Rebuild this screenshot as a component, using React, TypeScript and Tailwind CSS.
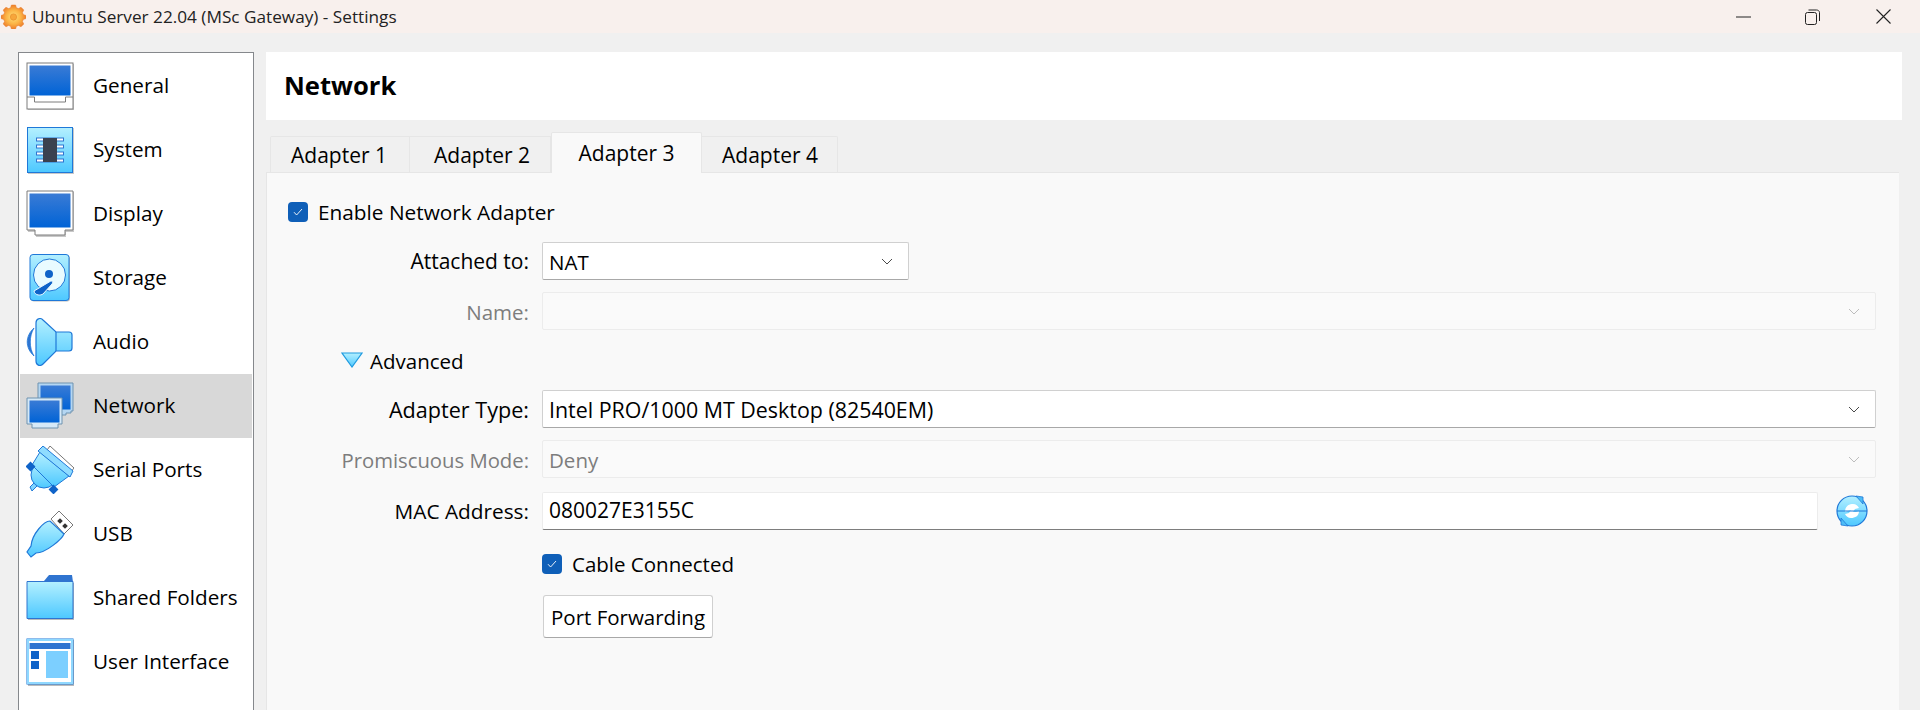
import type { ReactNode } from 'react'

const BLUE = '#2f74d0'

function Defs() {
	return (
		<svg width="0" height="0" className="absolute">
			<defs>
				<linearGradient id="screen" x1="0" y1="0" x2="0" y2="1">
					<stop offset="0" stopColor="#3a7bd5" />
					<stop offset="1" stopColor="#0063d6" />
				</linearGradient>
				<linearGradient id="sky" x1="0" y1="0" x2="0" y2="1">
					<stop offset="0" stopColor="#b4f0ff" />
					<stop offset="1" stopColor="#4dc8ff" />
				</linearGradient>
				<radialGradient id="gear" cx="0.5" cy="0.5" r="0.5">
					<stop offset="0" stopColor="#ffe27a" />
					<stop offset="0.6" stopColor="#fbb244" />
					<stop offset="1" stopColor="#ee7f2c" />
				</radialGradient>
			</defs>
		</svg>
	)
}

function IconBox({ children }: { children: ReactNode }) {
	return (
		<svg width="48" height="48" viewBox="0 0 48 48" className="shrink-0">
			{children}
		</svg>
	)
}

function GeneralIcon() {
	return (
		<IconBox>
			<rect x="2" y="2" width="47" height="46" fill="#c8c8c8" />
			<rect x="1" y="1" width="46" height="46" fill="#fff" stroke="#7c7c7c" strokeWidth="1" />
			<rect x="3.5" y="3.5" width="41" height="30" fill="url(#screen)" />
			<path d="M1 35H8.5V40H39.5V35H47" fill="none" stroke="#7c7c7c" />
		</IconBox>
	)
}

function SystemIcon() {
	return (
		<IconBox>
			<rect x="2" y="2" width="46" height="46" fill="#c8c8c8" />
			<rect x="1.5" y="1.5" width="45" height="45" fill="url(#sky)" stroke="#1f78d8" />
			{[13, 20, 27, 34].map((y) => (
				<rect key={y} x="10.5" y={y - 1} width="27" height="3" fill="#fff" stroke="#2f74d0" />
			))}
			<rect x="17" y="12" width="14" height="24" fill="#3a4150" />
		</IconBox>
	)
}

function DisplayIcon() {
	return (
		<IconBox>
			<path d="M2 2H48V42H40V47H10V42H2Z" fill="#c8c8c8" />
			<path d="M1 1H47V40H39V45H9V40H1Z" fill="#fff" stroke="#7c7c7c" />
			<rect x="3.5" y="3.5" width="41" height="34" fill="url(#screen)" />
		</IconBox>
	)
}

function StorageIcon() {
	return (
		<IconBox>
			<rect x="5" y="1.5" width="39" height="46" rx="3" fill="#bbb" />
			<rect x="4" y="0.5" width="39" height="46" rx="3" fill="url(#sky)" stroke="#1f78d8" />
			<circle cx="23.5" cy="21" r="16" fill="#e9fbff" stroke="#1f78d8" />
			<circle cx="23" cy="20" r="4" fill="#0f63c8" />
			<path d="M8 37L24 27.5C26 26.3 27.5 28 26 30L17 40C15 41.5 9 42 8 37Z" fill="#0f63c8" stroke="#eaf9ff" />
		</IconBox>
	)
}

function AudioIcon() {
	return (
		<IconBox>
			<path d="M8 10C-1 18 -1 30 8 38C3 30 3 18 8 10Z" fill="#2f74d0" stroke="#1f78d8" strokeWidth="0.8" />
			<path d="M10 5C10 1 14 -1 17 2L30 14H43C45 14 46 15 46 17V30C46 32 45 33 43 33H30L17 46C14 49 10 47 10 43Z" fill="url(#sky)" stroke="#1f78d8" strokeWidth="1.2" />
			<path d="M30 14V33" stroke="#1f78d8" strokeWidth="1.2" />
		</IconBox>
	)
}

function NetworkIcon() {
	return (
		<svg width="48" height="48" viewBox="0 0 48 48" className="shrink-0">
			<path d="M12 1H47V29H45V31H40V33H12Z" fill="#b4d6f2" stroke="#6f93b0" />
			<rect x="14.5" y="3.5" width="30" height="24" fill="url(#screen)" />
			<path d="M1 16H36V42H32V46H6V42H1Z" fill="#d5e9f8" stroke="#6f93b0" />
			<rect x="3.5" y="18.5" width="30" height="22" fill="url(#screen)" />
		</svg>
	)
}

function SerialIcon() {
	return (
		<IconBox>
			<path d="M24 0L48 22L44 27L21 4Z" fill="#fff" stroke="#777" />
			<path d="M4 41L9 36L12 39L6 45Z" fill="#7ed4ff" stroke="#1f78d8" />
			<circle cx="18" cy="29" r="13" fill="url(#sky)" stroke="#1f78d8" />
			<path d="M14 6L43 30L28 41L6 19Z" fill="url(#sky)" stroke="#1f78d8" />
			<path d="M17 0L47 25L44 31L12 5Z" fill="#8fdcff" stroke="#1f78d8" />
			<rect x="1" y="17" width="7" height="7" fill="#0f63c8" transform="rotate(45 4.5 20.5)" />
			<rect x="24" y="40" width="7" height="7" fill="#0f63c8" transform="rotate(45 27.5 43.5)" />
		</IconBox>
	)
}

function UsbIcon() {
	return (
		<IconBox>
			<path d="M25 9L33 1L47 15L38 24Z" fill="#fff" stroke="#777" />
			<rect x="32" y="9" width="4" height="4" fill="#333" transform="rotate(45 34 11)" />
			<rect x="37" y="14" width="4" height="4" fill="#333" transform="rotate(45 39 16)" />
			<path d="M24 11C18 11 6 24 5 36L1 42L5 47L10 43C20 43 36 29 38 24Z" fill="url(#sky)" stroke="#1f78d8" strokeWidth="1.2" />
		</IconBox>
	)
}

function FolderIcon() {
	return (
		<IconBox>
			<path d="M2 9H48V46H2Z" fill="#bbb" />
			<path d="M18 7L23 1H46L47 8H18Z" fill={BLUE} />
			<path d="M1 7.5H47V44.5H1Z" fill="url(#sky)" stroke="#2f74d0" />
		</IconBox>
	)
}

function UiIcon() {
	return (
		<IconBox>
			<rect x="2" y="2" width="46" height="46" fill="#bbb" />
			<rect x="1" y="1" width="46" height="45" fill="#fff" stroke="#1f78d8" strokeWidth="1" />
			<rect x="2" y="2" width="44" height="43" fill="none" stroke="#8fd8ff" strokeWidth="2" />
			<rect x="3.5" y="5" width="41" height="6" fill={BLUE} />
			<rect x="5" y="13" width="8" height="8" fill="#0f63c8" />
			<rect x="5" y="23" width="8" height="8" fill="#0f63c8" />
			<rect x="20" y="13" width="22" height="27" fill="#7ccfff" />
		</IconBox>
	)
}

const sections = [
	{ label: 'General', icon: <GeneralIcon /> },
	{ label: 'System', icon: <SystemIcon /> },
	{ label: 'Display', icon: <DisplayIcon /> },
	{ label: 'Storage', icon: <StorageIcon /> },
	{ label: 'Audio', icon: <AudioIcon /> },
	{ label: 'Network', icon: <NetworkIcon />, active: true },
	{ label: 'Serial Ports', icon: <SerialIcon /> },
	{ label: 'USB', icon: <UsbIcon /> },
	{ label: 'Shared Folders', icon: <FolderIcon /> },
	{ label: 'User Interface', icon: <UiIcon /> },
]

function Checkbox() {
	return (
		<span className="flex h-5 w-5 shrink-0 items-center justify-center rounded-[4px] bg-[#0f5fb8]">
			<svg width="10" height="8" viewBox="0 0 10 8" fill="none">
				<path d="M1 4.2L3.6 7L9 1" stroke="#fff" strokeWidth="0.9" />
			</svg>
		</span>
	)
}

function Chevron({ dim }: { dim?: boolean }) {
	return (
		<svg width="12" height="7" viewBox="0 0 12 7" fill="none" className="shrink-0">
			<path d="M1 1L6 6L11 1" stroke={dim ? '#bdbdbd' : '#4a4a4a'} strokeWidth="1" />
		</svg>
	)
}

function Row({ label, dim, className, labelClass, children }: { label: string; dim?: boolean; className?: string; labelClass?: string; children: ReactNode }) {
	return (
		<div className={`flex h-[38px] items-center ${className ?? ''}`}>
			<span className={`w-[262px] shrink-0 pt-[2px] text-right ${dim ? 'text-[#7d7d7d]' : 'text-black'} ${labelClass ?? ''}`}>{label}</span>
			<div className="ml-[13px] flex h-full min-w-0 flex-1 items-center">{children}</div>
		</div>
	)
}

function Combo({ value, dim, className, valueClass }: { value?: string; dim?: boolean; className?: string; valueClass?: string }) {
	return (
		<div
			className={`flex h-full items-center justify-between rounded-[2px] border pl-[6px] pr-[15px] ${
				dim ? 'border-[#ececec] bg-[#fafafa] text-[#7d7d7d]' : 'border-[#d0d0d0] border-b-[#a8a8a8] bg-white text-black'
			} ${className ?? ''}`}
		>
			<span className={`pt-[2px] ${valueClass ?? ''}`}>{value}</span>
			<Chevron dim={dim} />
		</div>
	)
}

function Tab({ label, active, className }: { label: string; active?: boolean; className: string }) {
	return (
		<div
			className={`flex items-center justify-center border border-b-0 border-[#e6e6e6] text-[21px] ${
				active ? 'relative z-10 -mb-px h-[41px] bg-[#f9f9f9] pt-[1px]' : 'h-[36px] bg-[#f0f0f0] pt-[3px]'
			} ${className}`}
		>
			{label}
		</div>
	)
}

export default function App() {
	return (
		<div className="flex h-[710px] w-[1920px] flex-col overflow-hidden bg-[#f0f0f0] font-['Open_Sans',sans-serif] text-[20.5px] text-black">
			<Defs />
			{/* title bar */}
			<div className="flex h-[33px] shrink-0 items-center bg-[#f8f0ed] pl-[1px]">
				<svg width="25" height="25" viewBox="0 0 24 24" className="shrink-0">
					<path
						d="M10 1H14L14.8 3.6 16.8 4.4 19.2 3.1 21.9 5.8 20.6 8.2 21.4 10.2 24 11V14L21.4 14.8 20.6 16.8 21.9 19.2 19.2 21.9 16.8 20.6 14.8 21.4 14 24H10L9.2 21.4 7.2 20.6 4.8 21.9 2.1 19.2 3.4 16.8 2.6 14.8 0 14V11L2.6 10.2 3.4 8.2 2.1 5.8 4.8 3.1 7.2 4.4 9.2 3.6Z"
						fill="url(#gear)"
						stroke="#e87f30"
						strokeWidth="0.5"
					/>
					<circle cx="12" cy="12.5" r="3" fill="#f7a63a" stroke="#e8902f" strokeWidth="0.7" />
				</svg>
				<span className="ml-[6px] text-[17.2px] text-[#222]">Ubuntu Server 22.04 (MSc Gateway) - Settings</span>
				<div className="ml-auto flex items-center text-[#222]">
					<svg width="15" height="2" viewBox="0 0 15 2" className="mr-[54px]">
						<path d="M0 1H15" stroke="#222" strokeWidth="1" />
					</svg>
					<svg width="15" height="16" viewBox="0 0 15 16" fill="none" className="mr-[56px]">
						<rect x="0.5" y="3.5" width="11" height="12" rx="2" stroke="#222" />
						<path d="M3.5 1H11.5C13 1 14.5 2 14.5 3.5V12" stroke="#222" />
					</svg>
					<svg width="15" height="15" viewBox="0 0 15 15" fill="none" className="mr-[29px]">
						<path d="M0.5 0.5L14.5 14.5M14.5 0.5L0.5 14.5" stroke="#222" strokeWidth="1.1" />
					</svg>
				</div>
			</div>

			<div className="flex min-h-0 flex-1 pl-[18px] pt-[19px]">
				{/* sections list */}
				<div className="h-[680px] w-[236px] shrink-0 border border-[#85888c] bg-white px-[1px] pt-[1px]">
					{sections.map((s) => (
						<div key={s.label} className={`flex h-16 items-center pl-[6px] ${s.active ? 'bg-[#d8d8d8]' : ''}`}>
							{s.icon}
							<span className="ml-[19px] text-[20.7px]">{s.label}</span>
						</div>
					))}
				</div>

				{/* page */}
				<div className="ml-[12px] flex w-[1636px] shrink-0 flex-col">
					<div className="flex h-[68px] shrink-0 items-center bg-white pl-[18px] text-[25.6px] font-bold">Network</div>
					<div className="ml-[4px] mt-[13px] flex h-[39px] shrink-0 items-end">
						<Tab label="Adapter 1" className="w-[140px] rounded-tl-[2px] pr-[2px]" />
						<Tab label="Adapter 2" className="w-[141px] border-l-0 pl-[4px]" />
						<Tab label="Adapter 3" active className="w-[151px] rounded-t-[2px]" />
						<Tab label="Adapter 4" className="w-[136px] rounded-tr-[2px] border-l-0 pl-[1px]" />
					</div>
					<div className="mr-[3px] min-h-0 flex-1 border-l border-t border-[#e6e6e6] bg-[#f9f9f9]">
						<div className="ml-[21px] mt-[29px] flex h-5 items-center gap-[10px]">
							<Checkbox />
							<span className="pt-[2px] text-[20.8px]">Enable Network Adapter</span>
						</div>
						<Row label="Attached to:" labelClass="text-[21px]" className="mt-[20px]">
							<Combo value="NAT" className="w-[367px]" />
						</Row>
						<Row label="Name:" dim className="mt-[12px]">
							<Combo dim className="mr-[23px] flex-1" />
						</Row>
						<div className="ml-[74px] mt-[11px] flex h-[38px] items-center gap-[7px]">
							<svg width="22" height="16" viewBox="0 0 22 16" className="shrink-0">
								<path d="M1 1H21L11 15Z" fill="url(#sky)" stroke="#1f9be0" strokeWidth="1.2" />
							</svg>
							<span className="pt-[2px]">Advanced</span>
						</div>
						<Row label="Adapter Type:" labelClass="text-[21.6px]" className="mt-[11px]">
							<Combo value="Intel PRO/1000 MT Desktop (82540EM)" valueClass="text-[21.4px]" className="mr-[23px] flex-1" />
						</Row>
						<Row label="Promiscuous Mode:" dim labelClass="text-[20.3px]" className="mt-[12px]">
							<Combo value="Deny" dim className="mr-[23px] flex-1" />
						</Row>
						<Row label="MAC Address:" labelClass="text-[20.8px]" className="mt-[14px]">
							<div className="flex h-full flex-1 items-center rounded-[2px] border border-[#ececec] border-b-[#7d7d7d] bg-white pb-[1px] pl-[6px] text-[21px]">080027E3155C</div>
							<svg width="34" height="34" viewBox="0 0 34 34" className="ml-[17px] mr-[30px] shrink-0">
								<circle cx="17" cy="17" r="15" fill="url(#sky)" stroke="#1f78d8" strokeWidth="1.2" />
								<path d="M21 2L28 3L28 10Z" fill="#4dbcf5" stroke="#1f78d8" strokeWidth="0.8" />
								<path d="M13 32L6 31L6 24Z" fill="#4dbcf5" stroke="#1f78d8" strokeWidth="0.8" />
								<path d="M10 18C10 12 14 10 18 10C21 10 23 12 24 14L20 15L18 18L21 18L24 17C24 22 20 24 16 24C13 24 11 22 10 20L14 19L16 16L13 17Z" fill="#fff" />
								<path d="M2 17H32" stroke="#1f78d8" strokeWidth="1" />
							</svg>
						</Row>
						<div className="ml-[275px] mt-[24px] flex h-5 items-center gap-[10px]">
							<Checkbox />
							<span className="pt-[1px]">Cable Connected</span>
						</div>
						<button className="ml-[276px] mt-[21px] flex h-[43px] w-[170px] items-center justify-center rounded-[3px] border border-[#d0d0d0] border-b-[#a8a8a8] bg-white pt-[2px]">
							Port Forwarding
						</button>
					</div>
				</div>
			</div>
		</div>
	)
}
